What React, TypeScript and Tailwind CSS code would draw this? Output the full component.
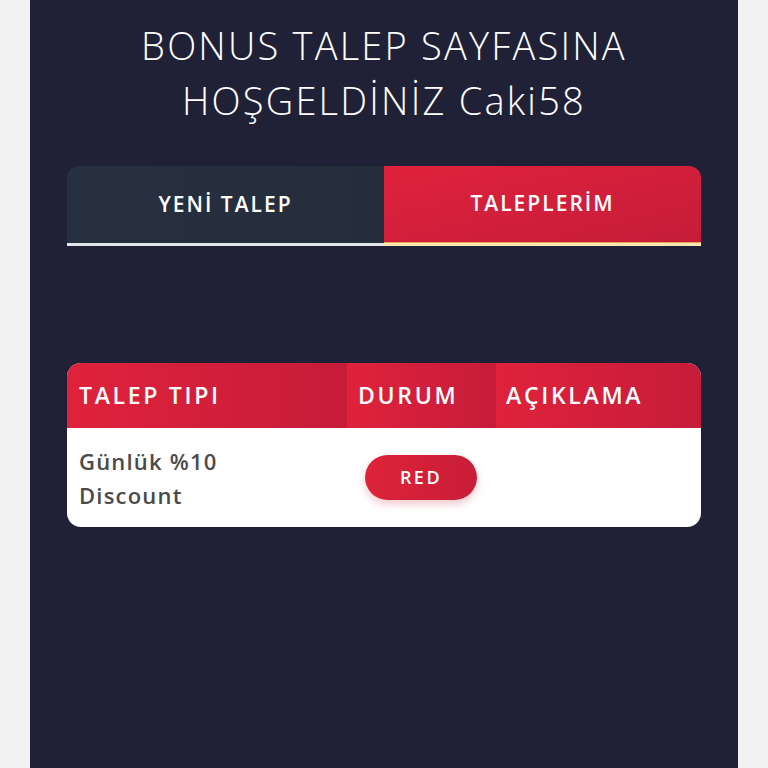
import React from "react";

export default function App() {
  const font = { fontFamily: '"Open Sans", "Liberation Sans", sans-serif' };
  return (
    <div className="min-h-[768px] w-full bg-[#f2f2f2]" style={font}>
      <div className="mx-[30px] min-h-[768px] w-[708px] bg-[#202136] px-[37px]">
        <h1 className="pt-[18px] text-center text-[38px] font-light leading-[55px] tracking-[2.2px] text-white">
          BONUS TALEP SAYFASINA
          <br />
          HOŞGELDİNİZ Caki58
        </h1>

        <div className="mt-[38px] flex h-[80px] overflow-hidden rounded-t-[12px]">
          <div className="flex flex-1 flex-col bg-gradient-to-r from-[#27303f] to-[#252d3b]">
            <div className="flex flex-1 items-center justify-center text-[21px] font-semibold tracking-[2px] text-white">
              YENİ TALEP
            </div>
            <div className="h-[3px] bg-[#e3e6ec]" />
          </div>
          <div className="flex flex-1 flex-col bg-gradient-to-br from-[#e0223b] to-[#c41c3a]">
            <div className="flex flex-1 items-center justify-center text-[21px] font-semibold tracking-[2px] text-white">
              TALEPLERİM
            </div>
            <div className="h-[1px] bg-[#f0a54a]" />
            <div className="h-[3px] bg-[#fbe8b2]" />
          </div>
        </div>

        <div className="mt-[117px] overflow-hidden rounded-[14px] bg-white">
          <div className="flex h-[65px] text-[23px] font-semibold tracking-[2.7px] text-white">
            <div className="flex w-[280px] items-center bg-gradient-to-r from-[#e0223b] to-[#c61c3a] pl-[12px]">
              TALEP TIPI
            </div>
            <div className="flex w-[149px] items-center bg-gradient-to-r from-[#e0223b] to-[#c61c3a] pl-[11px]">
              DURUM
            </div>
            <div className="flex flex-1 items-center bg-gradient-to-r from-[#e0223b] to-[#c61c3a] pl-[10px]">
              AÇIKLAMA
            </div>
          </div>
          <div className="flex h-[99px] items-center">
            <div className="w-[280px] pl-[12px] text-[22px] font-semibold leading-[34px] tracking-[1.2px] text-[#4a4a4a]">
              Günlük %10
              <br />
              Discount
            </div>
            <div className="flex w-[149px] items-center pl-[18px]">
              <div className="flex h-[45px] w-[112px] items-center justify-center rounded-full bg-gradient-to-r from-[#dd2339] to-[#c91d38] text-[18px] font-semibold tracking-[2.5px] text-white shadow-[0_4px_8px_rgba(200,30,60,0.25)]">
                RED
              </div>
            </div>
            <div className="flex-1" />
          </div>
        </div>
      </div>
    </div>
  );
}
